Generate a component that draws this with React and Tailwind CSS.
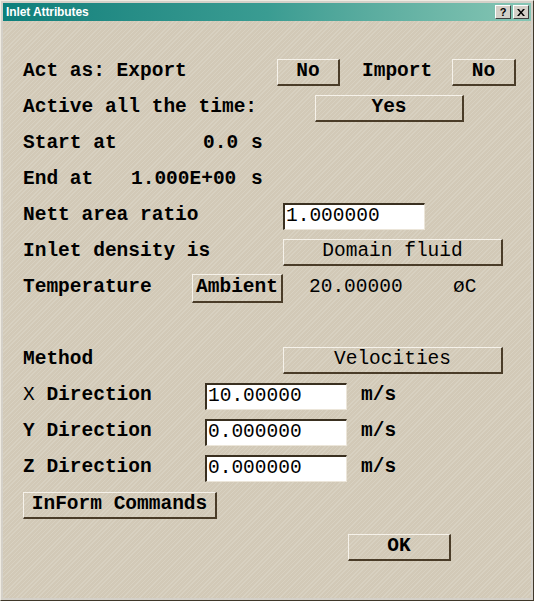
import React from 'react';

const mono = "font-['Liberation_Mono','Courier_New',monospace]";

const Btn = ({ w, h = 'h-[27px]', children }) => (
    <button
        className={`${w} ${h} flex items-center justify-center border-t border-l border-t-[#f6f2ea] border-l-[#f6f2ea] border-r-2 border-b-2 border-r-[#4a3c28] border-b-[#4a3c28] text-black font-bold`}
    >
        {children}
    </button>
);

const Field = ({ w, value }) => (
    <div
        className={`${w} h-[27px] flex items-center bg-white border-t-2 border-l-2 border-t-[#3a3020] border-l-[#3a3020] border-r border-b border-r-[#ece6da] border-b-[#ece6da] pl-[1px] font-normal`}
    >
        {value}
    </div>
);

const Row = ({ children }) => <div className="h-[36px] flex items-center">{children}</div>;

export default function App() {
    return (
        <div className="w-[534px] h-[601px] bg-[#d4d0c8] border-t border-l border-[#efebe2] border-r border-b border-r-[#40382a] border-b-[#40382a] p-[2px] flex flex-col">
            <div className="h-[18px] flex items-center justify-between bg-gradient-to-r from-[#0b7f7b] via-[#3a9c92] to-[#86c6b4] pl-[3px] pr-[2px]">
                <span className="text-white text-[12px] font-bold font-['Liberation_Sans',Arial,sans-serif] tracking-[-0.1px]">
                    Inlet Attributes
                </span>
                <div className="flex gap-[2px]">
                    <span className="w-[16px] h-[14px] bg-[#d4d0c8] border-t border-l border-t-white border-l-white border-r border-b border-r-[#404040] border-b-[#404040] flex items-center justify-center text-[11px] font-bold font-['Liberation_Sans',Arial,sans-serif] leading-none">
                        ?
                    </span>
                    <span className="w-[16px] h-[14px] bg-[#d4d0c8] border-t border-l border-t-white border-l-white border-r border-b border-r-[#404040] border-b-[#404040] flex items-center justify-center">
                        <svg width="8" height="7" viewBox="0 0 8 7">
                            <path d="M0 0h2l2 2.5L6 0h2L5 3.5 8 7H6L4 4.5 2 7H0l3-3.5z" fill="#000" />
                        </svg>
                    </span>
                </div>
            </div>

            <div
                className={`flex-1 bg-[#d6cebd] bg-[repeating-linear-gradient(135deg,#d8d1c1_0px,#d8d1c1_1px,#d2c9b7_1px,#d2c9b7_3px)] pl-[20px] pt-[33px] text-[19.5px] font-bold text-black ${mono}`}
            >
                <Row>
                    <span className="w-[254px]">Act as: Export</span>
                    <Btn w="w-[63px]">No</Btn>
                    <span className="w-[90px] ml-[22px]">Import</span>
                    <Btn w="w-[64px]">No</Btn>
                </Row>
                <Row>
                    <span className="w-[292px]">Active all the time:</span>
                    <Btn w="w-[149px]">Yes</Btn>
                </Row>
                <Row>
                    <span className="w-[180px]">Start at</span>
                    <span className="w-[48px]">0.0</span>
                    <span>s</span>
                </Row>
                <Row>
                    <span className="w-[108px]">End at</span>
                    <span className="w-[120px]">1.000E+00</span>
                    <span>s</span>
                </Row>
                <Row>
                    <span className="w-[260px]">Nett area ratio</span>
                    <Field w="w-[142px]" value="1.000000" />
                </Row>
                <Row>
                    <span className="w-[260px]">Inlet density is</span>
                    <Btn w="w-[220px]">
                        <span className="font-normal">Domain fluid</span>
                    </Btn>
                </Row>
                <Row>
                    <span className="w-[169px]">Temperature</span>
                    <Btn w="w-[91px]" h="h-[29px]">
                        Ambient
                    </Btn>
                    <span className="w-[144px] ml-[26px] font-normal">20.00000</span>
                    <span className="font-normal">øC</span>
                </Row>
                <Row />
                <Row>
                    <span className="w-[260px]">Method</span>
                    <Btn w="w-[220px]">
                        <span className="font-normal">Velocities</span>
                    </Btn>
                </Row>
                <Row>
                    <span className="w-[182px]">
                        <span className="font-normal">X</span> Direction
                    </span>
                    <Field w="w-[142px]" value="10.00000" />
                    <span className="ml-[14px]">m/s</span>
                </Row>
                <Row>
                    <span className="w-[182px]">Y Direction</span>
                    <Field w="w-[142px]" value="0.000000" />
                    <span className="ml-[14px]">m/s</span>
                </Row>
                <Row>
                    <span className="w-[182px]">Z Direction</span>
                    <Field w="w-[142px]" value="0.000000" />
                    <span className="ml-[14px]">m/s</span>
                </Row>
                <div className="mt-[6px]">
                    <Btn w="w-[194px]">InForm Commands</Btn>
                </div>
                <div className="mt-[15px] pl-[325px]">
                    <Btn w="w-[103px]">OK</Btn>
                </div>
            </div>
        </div>
    );
}
